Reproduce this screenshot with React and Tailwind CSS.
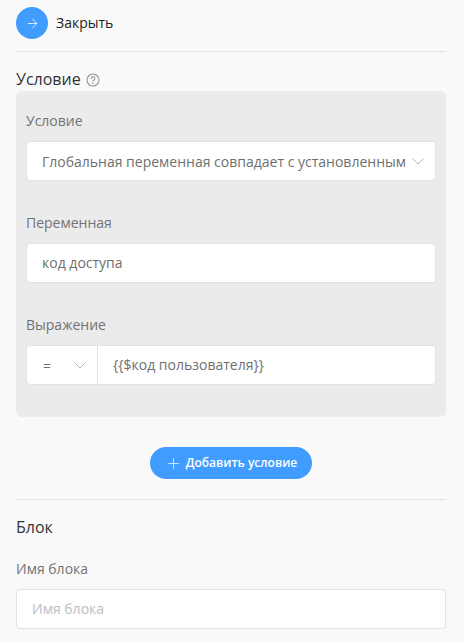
import { ArrowRight, Plus } from 'lucide-react';

const Label = ({ children }) => (
  <div className="h-[20px] mb-[10px] text-[14px] leading-[20px] text-[#737373]">{children}</div>
);

const Chevron = () => (
  <svg width="12" height="7" viewBox="0 0 12 7" fill="none" className="shrink-0">
    <path d="M.5.5 6 6l5.5-5.5" stroke="#b4b4b8" strokeWidth="1" />
  </svg>
);

const App = () => {
  return (
    <div className="w-[464px] h-[641px] overflow-hidden bg-[#f9f9fa] px-[16px] pt-[7px] font-['Open_Sans',sans-serif]">
      {/* Закрыть */}
      <div className="flex items-center gap-[8px] h-[32px]">
        <button className="w-[32px] h-[32px] rounded-full bg-[#409cff] text-white flex items-center justify-center">
          <ArrowRight size={15} strokeWidth={1.25} />
        </button>
        <span className="text-[14px] text-[#222222] mb-[2px]">Закрыть</span>
      </div>
      <div className="h-px bg-[#e2e2e6] w-[430px] mt-[12px]"></div>

      {/* Условие */}
      <div className="flex items-center gap-[5px] h-[22px] mt-[16px] mb-[1px]">
        <span className="text-[16px] leading-[22px] text-[#333333]">Условие</span>
        <svg width="14" height="14" viewBox="0 0 14 14" fill="none" className="mt-[1px]">
          <circle cx="7" cy="7" r="6" stroke="#969696" strokeWidth="1.1" />
          <path d="M5.2 5.5a1.8 1.8 0 1 1 2.7 1.5c-.6.3-.9.7-.9 1.3" stroke="#969696" strokeWidth="1.1" strokeLinecap="round" />
          <circle cx="7" cy="10.2" r=".7" fill="#969696" />
        </svg>
      </div>
      <div className="w-[430px] h-[326px] rounded-[6px] bg-[#ebebeb] px-[10px] pt-[20px]">
        <Label>Условие</Label>
        <div className="h-[40px] rounded-[4px] border border-[#e2e2e6] bg-white pl-[15px] pr-[11px] flex items-center justify-between">
          <span className="text-[14px] text-[#6f6f6f] whitespace-nowrap">Глобальная переменная совпадает с установленным</span>
          <Chevron />
        </div>

        <div className="mt-[32px]">
          <Label>Переменная</Label>
        </div>
        <div className="h-[40px] rounded-[4px] border border-[#e2e2e6] bg-white px-[15px] flex items-center">
          <span className="text-[14px] text-[#6f6f6f] mb-[1px]">код доступа</span>
        </div>

        <div className="mt-[32px]">
          <Label>Выражение</Label>
        </div>
        <div className="h-[40px] rounded-[4px] border border-[#e2e2e6] bg-white flex items-center">
          <div className="w-[71px] h-full shrink-0 border-r border-[#e2e2e6] pl-[16px] pr-[11px] flex items-center justify-between">
            <span className="text-[14px] text-[#6f6f6f]">=</span>
            <Chevron />
          </div>
          <span className="pl-[15px] text-[14px] text-[#6f6f6f] mb-[1px]">{'{{$код пользователя}}'}</span>
        </div>
      </div>

      {/* Добавить условие */}
      <div className="flex justify-center w-[430px] mt-[30px]">
        <button className="w-[162px] h-[32px] rounded-full bg-[#409cff] text-white flex items-center justify-center gap-[4px]">
          <Plus size={17} strokeWidth={1} />
          <span className="text-[12px] font-semibold">Добавить условие</span>
        </button>
      </div>
      <div className="h-px bg-[#e2e2e6] w-[430px] mt-[20px]"></div>

      {/* Блок */}
      <div className="text-[16px] leading-[22px] text-[#333333] mt-[16px]">Блок</div>
      <div className="mt-[21px]">
        <Label>Имя блока</Label>
      </div>
      <div className="w-[430px] h-[40px] rounded-[4px] border border-[#e2e2e6] bg-white px-[15px] flex items-center">
        <span className="text-[14px] text-[#bdbdc4] mb-[1px]">Имя блока</span>
      </div>
    </div>
  );
};

export default App;
